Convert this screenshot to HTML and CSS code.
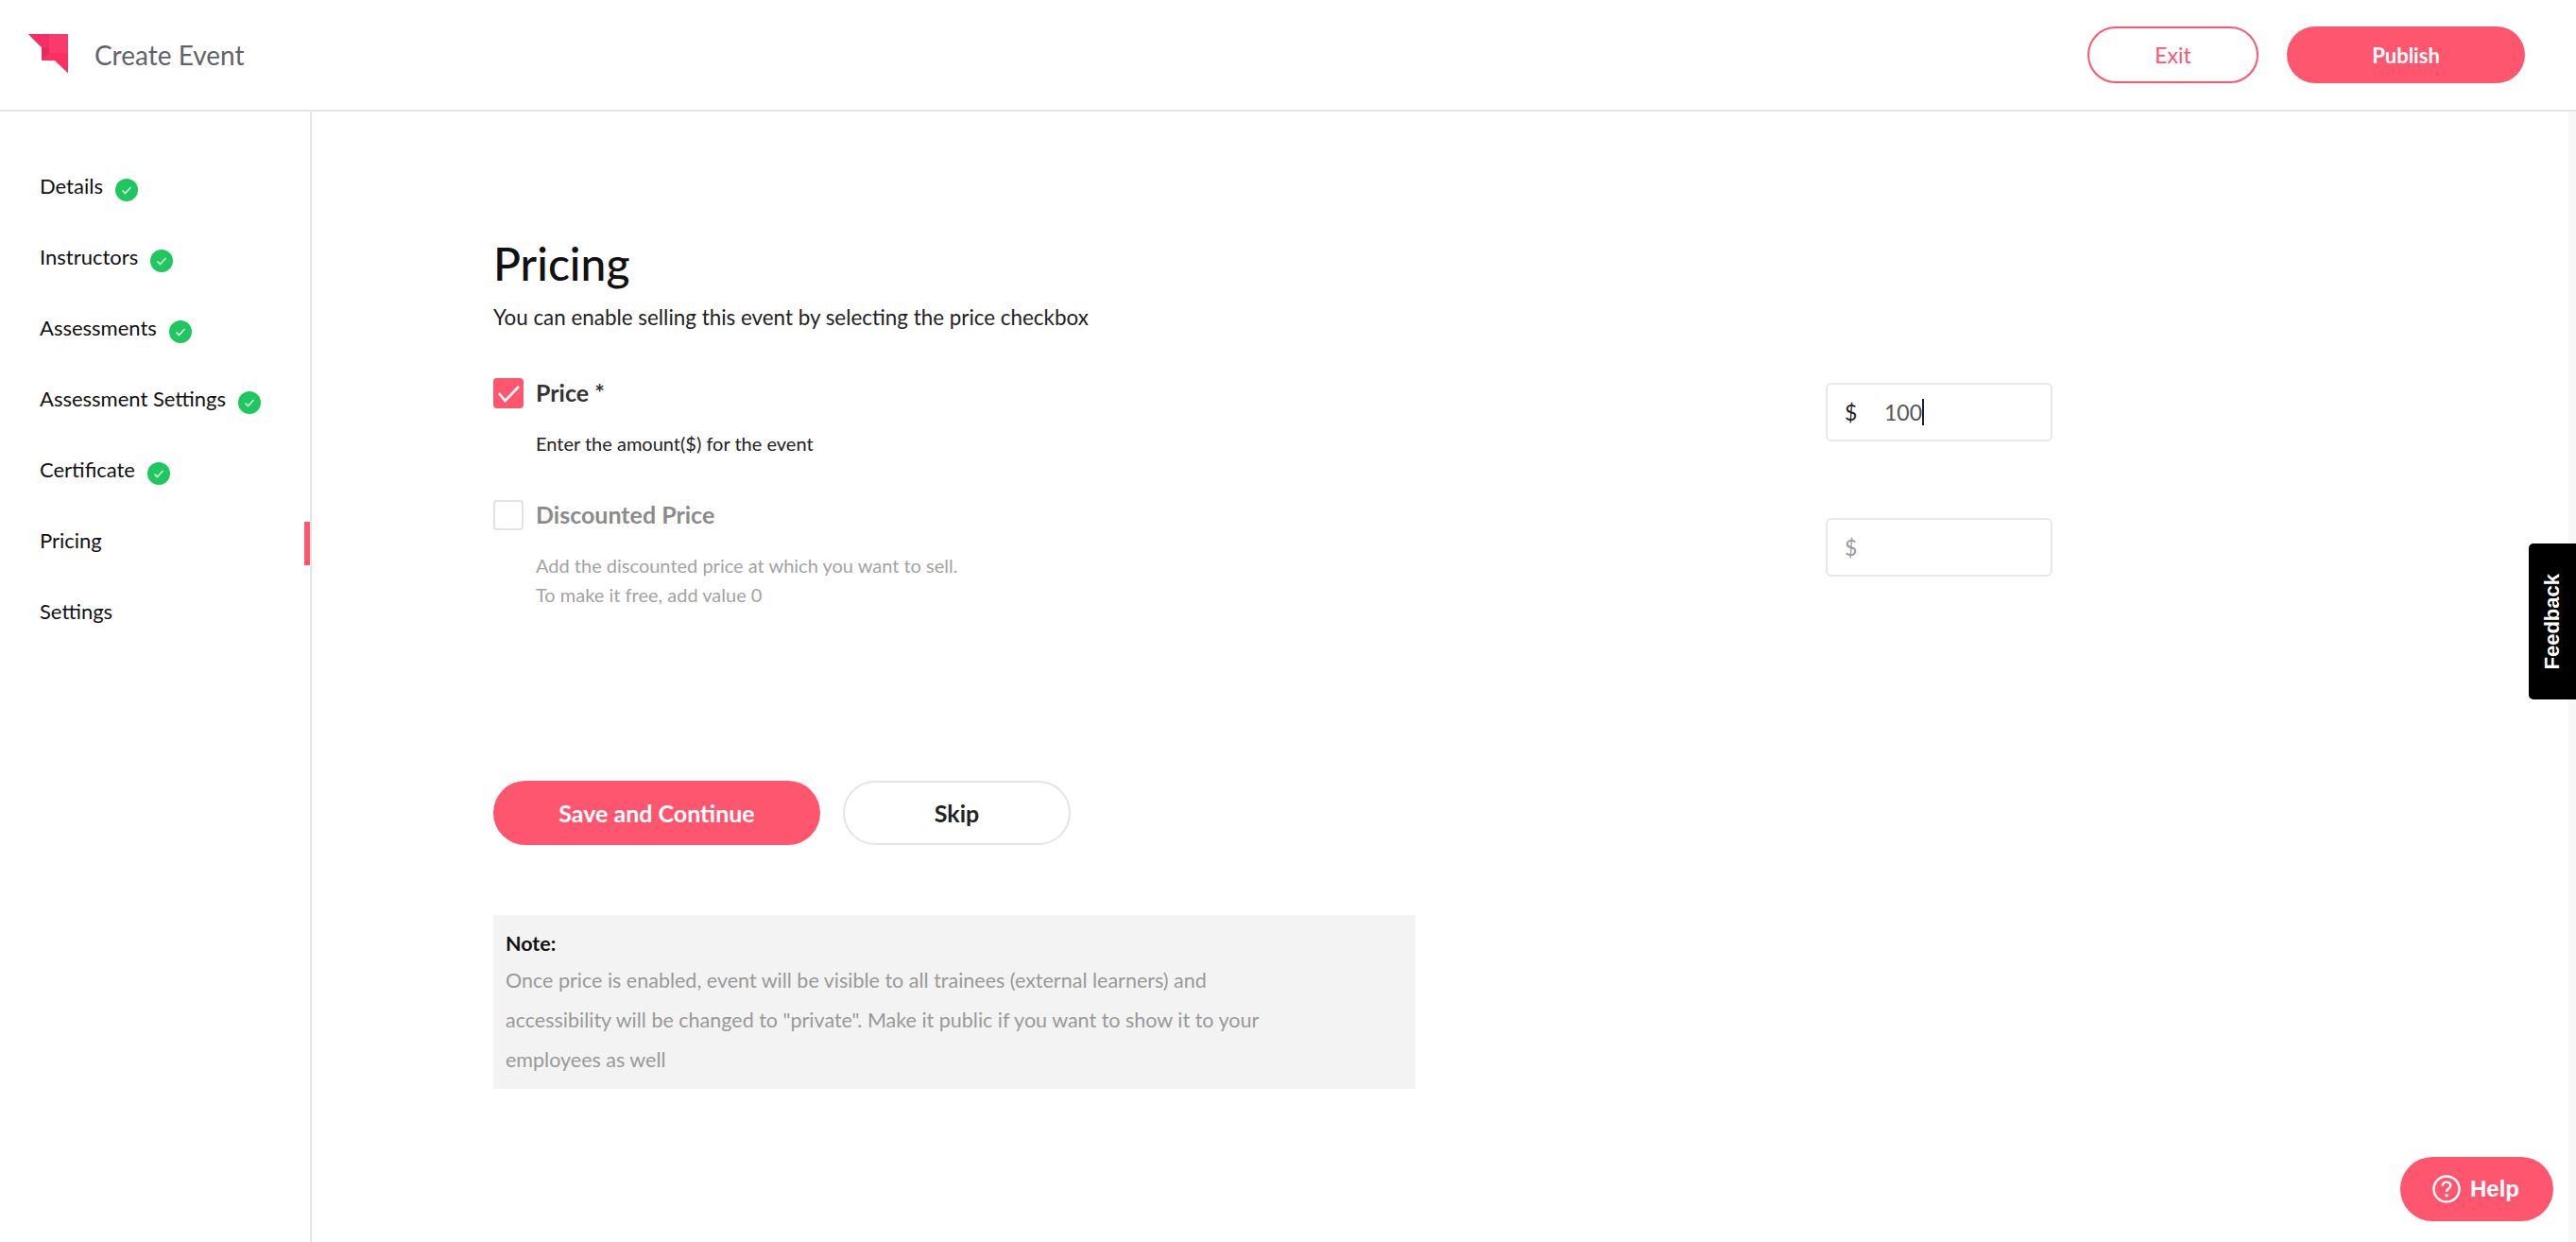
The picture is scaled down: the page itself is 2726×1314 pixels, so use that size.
FILE: index.html
```html
<!DOCTYPE html>
<html lang="en">
<head>
    <meta charset="UTF-8">
    <meta name="viewport" content="width=device-width, initial-scale=1.0">
    <title>Create Event</title>
    <link rel="stylesheet" href="styles.css">
</head>
<body>

    <header class="top-bar">
        <div class="brand">
            <svg class="logo" viewBox="0 0 42 42" aria-hidden="true">
                <polygon points="0,0 42,0 42,41 28,28 14,28 14,14" fill="#fb3a6c"/>
                <polygon points="0,0 22,0 22,14 14,14" fill="#f52f66"/>
                <polygon points="14,14 22,14 22,20 14,28" fill="#e92a61"/>
                <polygon points="22,20 14,28 28,28 42,41 42,20" fill="#fb2f62"/>
            </svg>
            <span class="page-title">Create Event</span>
        </div>
        <div class="top-actions">
            <button class="btn-exit">Exit</button>
            <button class="btn-publish">Publish</button>
        </div>
    </header>

    <div class="page-body">
        <nav class="side-nav">
            <a class="nav-item">Details <span class="done"><svg viewBox="0 0 24 24"><path d="M7.5 12.5l3 3 6-6.5" /></svg></span></a>
            <a class="nav-item">Instructors <span class="done"><svg viewBox="0 0 24 24"><path d="M7.5 12.5l3 3 6-6.5" /></svg></span></a>
            <a class="nav-item">Assessments <span class="done"><svg viewBox="0 0 24 24"><path d="M7.5 12.5l3 3 6-6.5" /></svg></span></a>
            <a class="nav-item">Assessment Settings <span class="done"><svg viewBox="0 0 24 24"><path d="M7.5 12.5l3 3 6-6.5" /></svg></span></a>
            <a class="nav-item">Certificate <span class="done"><svg viewBox="0 0 24 24"><path d="M7.5 12.5l3 3 6-6.5" /></svg></span></a>
            <a class="nav-item active">Pricing</a>
            <a class="nav-item">Settings</a>
        </nav>

        <main class="content">
            <h1>Pricing</h1>
            <p class="intro">You can enable selling this event by selecting the price checkbox</p>

            <div class="price-row">
                <div class="price-info">
                    <div class="check-line">
                        <span class="checkbox checked"><svg viewBox="0 0 32 32"><path d="M6 16l6.500 8L27 9" /></svg></span>
                        <label>Price *</label>
                    </div>
                    <p class="hint">Enter the amount($) for the event</p>
                </div>
                <div class="amount-box"><span class="currency">$</span><span class="amount">100</span><span class="caret"></span></div>
            </div>

            <div class="price-row disabled">
                <div class="price-info">
                    <div class="check-line">
                        <span class="checkbox"></span>
                        <label>Discounted Price</label>
                    </div>
                    <p class="hint">Add the discounted price at which you want to sell.<br>To make it free, add value 0</p>
                </div>
                <div class="amount-box"><span class="currency">$</span></div>
            </div>

            <div class="form-actions">
                <button class="btn-save">Save and Continue</button>
                <button class="btn-skip">Skip</button>
            </div>

            <div class="note">
                <strong>Note:</strong>
                <p>Once price is enabled, event will be visible to all trainees (external learners) and<br>accessibility will be changed to "private". Make it public if you want to show it to your<br>employees as well</p>
            </div>
        </main>

        <div class="scroll-track"></div>
    </div>

    <button class="feedback"><span>Feedback</span></button>

    <button class="help">
        <svg viewBox="0 0 30 30" aria-hidden="true">
            <circle cx="15" cy="15" r="13.5"/>
            <path d="M10.8 11.8c0-2.6 1.9-4.2 4.3-4.2 2.4 0 4.2 1.5 4.2 3.7 0 3.2-4.2 3.3-4.2 6.6"/>
            <circle class="dot" cx="15.1" cy="21.8" r="1.7"/>
        </svg>
        Help
    </button>

</body>
</html>
```

FILE: styles.css
```css
/* Reset some default styles */
* {
    box-sizing: border-box;
    margin: 0;
    padding: 0;
}

body {
    font-family: Lato, "Open Sans", sans-serif;
    background-color: #fff;
    color: #111;
    height: 1314px;
    overflow: hidden;
}

button {
    font-family: inherit;
    cursor: pointer;
}

.top-bar {
    display: flex;
    justify-content: space-between;
    align-items: center;
    height: 118px;
    padding: 0 54px 0 30px;
    border-bottom: 2px solid #e5e5e5;
}

.brand {
    display: flex;
    align-items: center;
    gap: 28px;
}

.logo {
    width: 42px;
    height: 42px;
    margin-top: -2px;
}

.page-title {
    font-size: 28px;
    color: #5f6368;
}

.top-actions {
    display: flex;
    gap: 30px;
}

.btn-exit, .btn-publish {
    height: 60px;
    border-radius: 30px;
}

.btn-exit {
    width: 181px;
    background-color: #fff;
    border: 2px solid #ff5670;
    color: #ff5670;
    font-size: 23px;
}

.btn-publish {
    width: 252px;
    background-color: #ff5670;
    border: none;
    color: #fff;
    font-size: 22px;
    font-weight: bold;
}

.page-body {
    display: flex;
    height: 1196px;
}

.side-nav {
    width: 330px;
    flex-shrink: 0;
    padding-top: 41px;
    border-right: 2px solid #e5e5e5;
}

.nav-item {
    position: relative;
    display: flex;
    align-items: center;
    gap: 13px;
    height: 75px;
    padding-left: 42px;
    font-size: 22px;
    color: #111;
}

.nav-item.active::after {
    content: "";
    position: absolute;
    top: 18px;
    right: 0;
    width: 6px;
    height: 46px;
    background-color: #ff5670;
}

.done {
    display: block;
    width: 24px;
    height: 24px;
    margin-top: 8px;
    border-radius: 50%;
    background-color: #1ec85f;
}

.done svg {
    display: block;
    width: 24px;
    height: 24px;
    fill: none;
    stroke: #dff7e8;
    stroke-width: 1.6;
}

.content {
    flex: 1;
    padding: 133px 0 0 192px;
}

h1 {
    font-size: 48px;
    font-weight: 500;
    line-height: 56px;
    color: #111;
}

.intro {
    margin-top: 15px;
    font-size: 22.4px;
    line-height: 28px;
    color: #222;
}

.price-row {
    display: flex;
    justify-content: space-between;
    align-items: flex-start;
    width: 1650px;
}

.intro + .price-row {
    margin-top: 50px;
}

.price-row.disabled {
    margin-top: 44px;
}

.check-line {
    display: flex;
    align-items: center;
    gap: 13px;
    height: 32px;
}

.check-line label {
    margin-top: -2px;
    font-size: 25px;
    font-weight: bold;
    color: #333;
}

.checkbox {
    display: block;
    width: 32px;
    height: 32px;
    border: 2px solid #e3e3e3;
    border-radius: 4px;
    background-color: #fff;
}

.checkbox.checked {
    border: none;
    background-color: #ff5670;
}

.checkbox svg {
    display: block;
    width: 32px;
    height: 32px;
    fill: none;
    stroke: #fff;
    stroke-width: 2.6;
}

.hint {
    margin: 22px 0 0 45px;
    font-size: 20px;
    line-height: 31px;
    color: #222;
}

.price-row.disabled label {
    color: #8b8b8b;
}

.price-row.disabled .hint {
    color: #a3a3a3;
}

.amount-box {
    display: flex;
    align-items: center;
    width: 240px;
    height: 62px;
    margin-top: 5px;
    padding-left: 18px;
    border: 2px solid #e8e8e8;
    border-radius: 6px;
    font-size: 23px;
    color: #555;
}

.disabled .amount-box {
    margin-top: 19px;
}

.currency {
    width: 42px;
    color: #222;
}

.disabled .currency {
    color: #999;
}

.caret {
    width: 2px;
    height: 28px;
    background-color: #222;
}

.form-actions {
    display: flex;
    gap: 24px;
    margin-top: 181px;
}

.btn-save, .btn-skip {
    height: 68px;
    border-radius: 34px;
    font-size: 25px;
    font-weight: bold;
}

.btn-save {
    width: 346px;
    background-color: #ff5670;
    border: none;
    color: #fff;
}

.btn-skip {
    width: 241px;
    background-color: #fff;
    border: 2px solid #e5e5e5;
    color: #222;
}

.note {
    width: 976px;
    height: 184px;
    margin-top: 74px;
    padding: 17px 13px 0;
    background-color: #f3f3f3;
    font-size: 21.5px;
}

.note strong {
    display: block;
    font-weight: bold;
    line-height: 26px;
    color: #111;
}

.note p {
    margin-top: 5px;
    line-height: 42px;
    color: #999;
}

.scroll-track {
    width: 8px;
    background-color: #f8f8f8;
}

.feedback {
    position: absolute;
    top: 575px;
    right: 0;
    display: flex;
    align-items: center;
    justify-content: center;
    width: 50px;
    height: 165px;
    background-color: #000;
    border: none;
    border-radius: 5px 0 0 5px;
    color: #fff;
    font-family: "Liberation Sans", Arial, sans-serif;
    font-size: 22px;
    font-weight: bold;
}

.feedback span {
    writing-mode: vertical-rl;
    transform: rotate(180deg);
}

.help {
    position: absolute;
    top: 1224px;
    left: 2540px;
    display: flex;
    align-items: center;
    gap: 10px;
    height: 68px;
    width: 162px;
    padding-left: 34px;
    background-color: #ff5670;
    border: none;
    border-radius: 34px;
    color: #fff;
    font-family: "Liberation Sans", Arial, sans-serif;
    font-size: 24px;
    font-weight: bold;
}

.help svg {
    width: 30px;
    height: 30px;
    fill: none;
    stroke: #fff;
    stroke-width: 2.4;
}

.help svg .dot {
    fill: #fff;
    stroke: none;
}
```
